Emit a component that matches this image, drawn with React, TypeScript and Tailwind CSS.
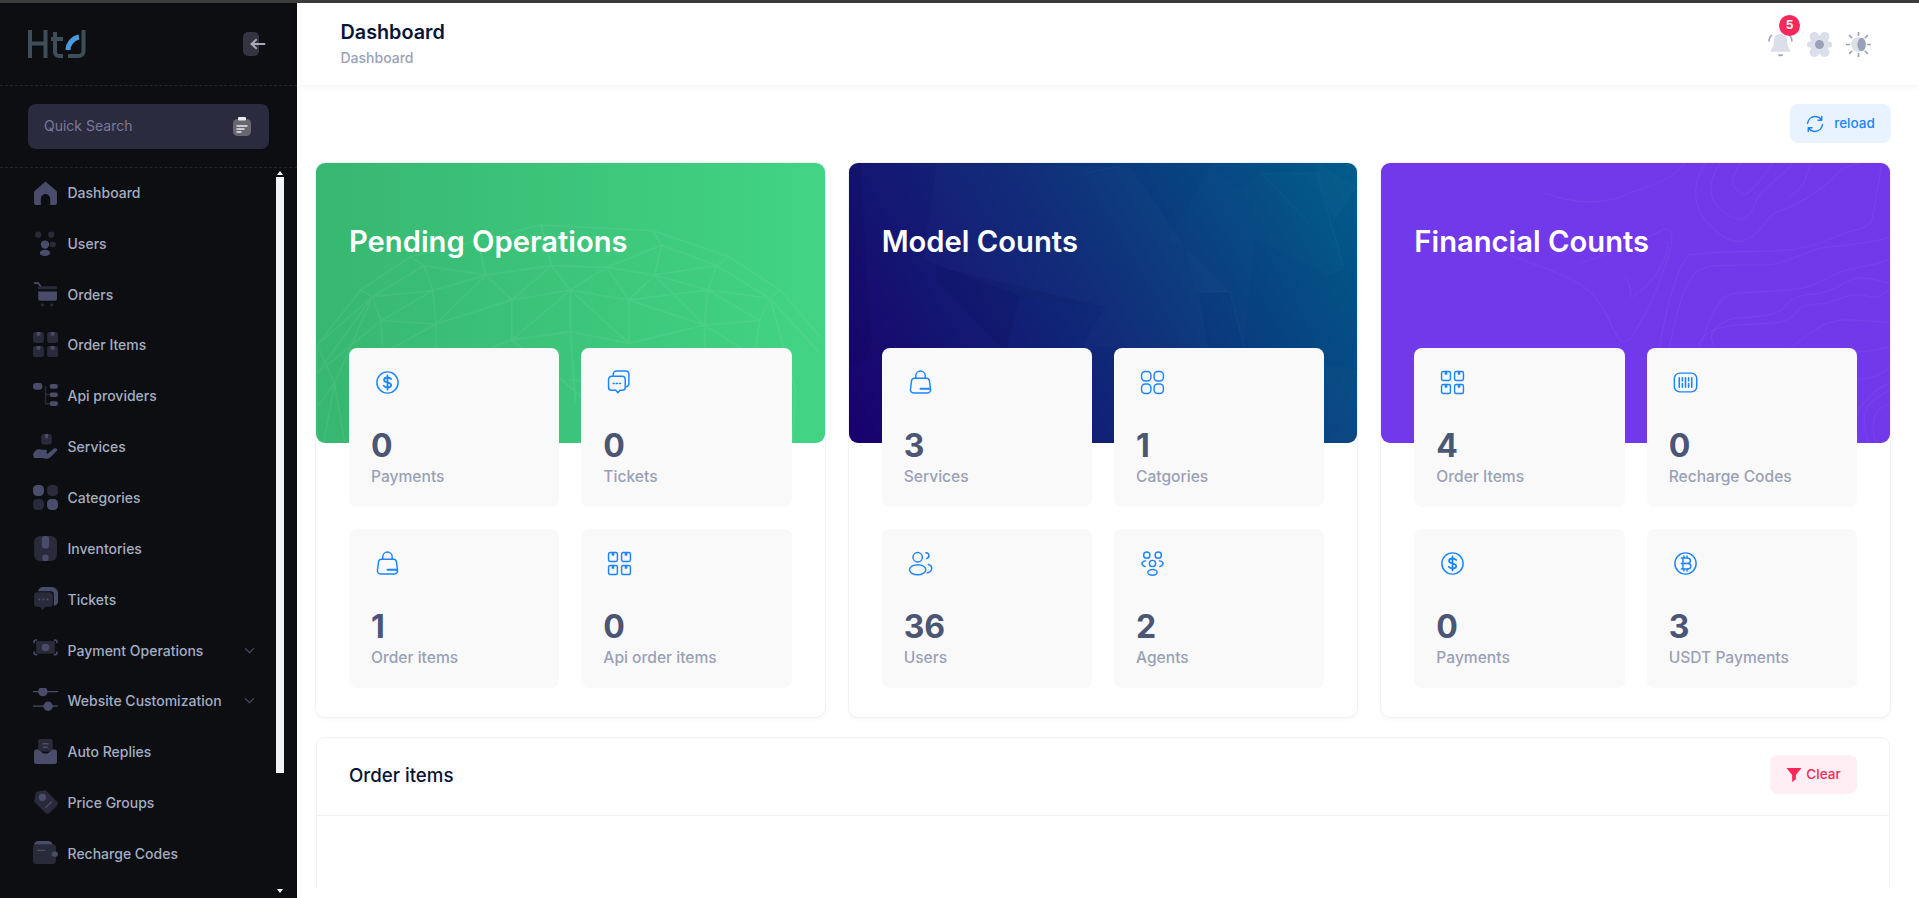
import React from "react";

const DIM = "#2a2b3a";
const MID = "#4a4c6b";

const navIcons: Record<string, React.ReactNode> = {
  home: <path d="M12 1.5 22.5 10.5a2 2 0 0 1 .5 1.4V22a2 2 0 0 1-2 2h-4.5v-6a4.5 4.5 0 0 0-9 0v6H3a2 2 0 0 1-2-2V11.9a2 2 0 0 1 .5-1.4Z" fill={MID} />,
  users: (
    <>
      <circle cx="5" cy="3.5" r="3" fill={DIM} /><circle cx="17.5" cy="3.5" r="3" fill={DIM} />
      <circle cx="11.5" cy="13" r="4" fill={MID} /><ellipse cx="19" cy="13" rx="3" ry="2.6" fill={DIM} />
      <ellipse cx="11.5" cy="21" rx="5" ry="3" fill={MID} />
    </>
  ),
  cart: (
    <>
      <path d="M1 1h4l3 4" stroke={MID} strokeWidth="1.6" fill="none" />
      <path d="M5 4h17a1 1 0 0 1 1 1v2H5Z" fill={DIM} />
      <path d="M5 9h18v7a2 2 0 0 1-2 2H7a2 2 0 0 1-2-2Z" fill={MID} />
      <circle cx="9" cy="22" r="1.6" fill={DIM} /><circle cx="18" cy="22" r="1.6" fill={DIM} />
    </>
  ),
  items: (
    <>
      {[[0, 0], [13.5, 0], [0, 13.5], [13.5, 13.5]].map(([x, y]) => (
        <g key={`${x}${y}`}>
          <rect x={x} y={y} width="10.5" height="10.5" rx="2.5" fill={DIM} />
          <rect x={x + 3.5} y={y} width="3.5" height="3.5" fill={MID} />
        </g>
      ))}
    </>
  ),
  api: (
    <>
      <path d="M12 3v17h4M12 11h4" stroke={DIM} strokeWidth="1.4" fill="none" />
      <rect x="0" y="0" width="9" height="6.5" rx="3.2" fill={MID} />
      <rect x="16" y="1" width="8" height="4.5" rx="2.2" fill={MID} />
      <rect x="16" y="9" width="8" height="4.5" rx="2.2" fill={MID} />
      <rect x="16" y="17.5" width="8" height="4.5" rx="2.2" fill={MID} />
    </>
  ),
  services: (
    <>
      <rect x="8" y="0" width="10" height="10" rx="2" fill={DIM} />
      <rect x="11.5" y="0" width="3" height="4" fill={MID} />
      <path d="M0 20c1-4 4-6 8-5h4c2 0 2 3 0 3l2 1 6-5c2-1 4 0 3 2l-6 6c-2 2-5 2-8 1l-5 0-3 0Z" fill={MID} />
    </>
  ),
  cats: (
    <>
      <rect x="0" y="0" width="10.5" height="10.5" rx="4" fill={MID} />
      <rect x="13.5" y="0" width="10.5" height="10.5" rx="4" fill={DIM} />
      <rect x="0" y="13.5" width="10.5" height="10.5" rx="4" fill={DIM} />
      <rect x="13.5" y="13.5" width="10.5" height="10.5" rx="4" fill={MID} />
    </>
  ),
  inv: (
    <>
      <rect x="1" y="0" width="22" height="24" rx="6" fill={DIM} />
      <rect x="8.5" y="0" width="7" height="12" rx="3" fill={MID} />
      <rect x="9" y="18" width="6" height="6" rx="2" fill={MID} />
    </>
  ),
  tickets: (
    <>
      <path d="M9 0h9a6 6 0 0 1 6 6v8a4 4 0 0 1-4 4V7a3 3 0 0 0-3-3H5a5 5 0 0 1 4-4Z" fill={MID} />
      <path d="M4 5h12a3 3 0 0 1 3 3v8a3 3 0 0 1-3 3h-4l-3 3-2-3H4a3 3 0 0 1-3-3V8a3 3 0 0 1 3-3Z" fill={DIM} />
      <circle cx="6" cy="12" r="1" fill={MID} /><circle cx="10" cy="12" r="1" fill={MID} /><circle cx="14" cy="12" r="1" fill={MID} />
    </>
  ),
  pay: (
    <>
      <rect x="3" y="3" width="18" height="12" fill={DIM} />
      <path d="M1 5V4a2 2 0 0 1 2-2h1M23 5V4a2 2 0 0 0-2-2h-1M1 13v1a2 2 0 0 0 2 2h1M23 13v1a2 2 0 0 1-2 2h-1" stroke={MID} strokeWidth="1.5" fill="none" />
      <circle cx="12" cy="9" r="3.6" fill={MID} />
    </>
  ),
  sliders: (
    <>
      <path d="M0 3.5h24M0 17.5h24" stroke={MID} strokeWidth="1.2" />
      <circle cx="9.5" cy="3.5" r="4.5" fill={MID} />
      <circle cx="14.5" cy="17.5" r="4.5" fill={MID} />
    </>
  ),
  replies: (
    <>
      <path d="M5 2a2 2 0 0 1 2-2h10a2 2 0 0 1 2 2v10H5Z" fill={DIM} />
      <path d="M9 4.5h6M9.5 8h5" stroke={MID} strokeWidth="1.4" />
      <path d="M1 12a2 2 0 0 1 2-2h2l5 4h4l5-4h2a2 2 0 0 1 2 2v10a2 2 0 0 1-2 2H3a2 2 0 0 1-2-2Z" fill={MID} />
    </>
  ),
  price: (
    <>
      <path d="M3 2 12 0l11 11a3 3 0 0 1 0 4l-7 7a3 3 0 0 1-4 0L1 11Z" fill={DIM} />
      <circle cx="9" cy="7" r="3.5" fill={MID} />
      <path d="M12 17l6-6" stroke={MID} strokeWidth="1.2" />
    </>
  ),
  wallet: (
    <>
      <path d="M1 4a4 4 0 0 1 4-4h10a5 5 0 0 1 4 4Z" fill={MID} />
      <rect x="0" y="3" width="22" height="19" rx="3" fill={DIM} />
      <path d="M4 9h8" stroke={MID} strokeWidth="1.2" />
      <rect x="18" y="10" width="6" height="5" rx="2.5" fill={MID} />
    </>
  ),
};

const nav: [string, string, boolean?][] = [
  ["Dashboard", "home"],
  ["Users", "users"],
  ["Orders", "cart"],
  ["Order Items", "items"],
  ["Api providers", "api"],
  ["Services", "services"],
  ["Categories", "cats"],
  ["Inventories", "inv"],
  ["Tickets", "tickets"],
  ["Payment Operations", "pay", true],
  ["Website Customization", "sliders", true],
  ["Auto Replies", "replies"],
  ["Price Groups", "price"],
  ["Recharge Codes", "wallet"],
];

const statIcons: Record<string, React.ReactNode> = {
  dollar: (
    <>
      <circle cx="12" cy="12" r="10.2" />
      <path strokeWidth="1.7" d="M15.5 8.7c-.8-1-2-1.5-3.5-1.5-2 0-3.3.9-3.3 2.4 0 3.4 6.8 1.4 6.8 4.8 0 1.5-1.4 2.4-3.4 2.4-1.6 0-2.9-.6-3.7-1.7M12 5.2v13.6" />
    </>
  ),
  chats: (
    <>
      <path d="M6 5.5V4a3 3 0 0 1 3-3h9a3 3 0 0 1 3 3v9a3 3 0 0 1-2.5 3" />
      <path d="M4.5 6h10a3 3 0 0 1 3 3v7.5a3 3 0 0 1-3 3h-2l-2 2.3-2-2.3h-4a3 3 0 0 1-3-3V9a3 3 0 0 1 3-3Z" />
      <path d="M6 13h1M9 13h1M12 13h1" />
    </>
  ),
  bag: (
    <>
      <path d="M7.5 8V5.5a4.5 4.5 0 0 1 9 0V8" />
      <path d="M6 8h12c1.5 0 2.3 1 2.6 2.3l1 8c.4 2.3-1 3.7-3 3.7H5.4c-2 0-3.400-1.400-3-3.700l1-8C3.700 9 4.500 8 6 8Z" />
      <path strokeWidth="1.800" d="M12 18h9" />
    </>
  ),
  grid: (
    <>
      <rect x="1.500" y="1.500" width="9" height="9" rx="3.500" />
      <rect x="13.500" y="1.500" width="9" height="9" rx="3.500" />
      <rect x="1.500" y="13.500" width="9" height="9" rx="3.500" />
      <rect x="13.500" y="13.500" width="9" height="9" rx="3.500" />
    </>
  ),
  boxes: (
    <>
      {[[1.500, 1.500], [14, 1.500], [1.500, 14], [14, 14]].map(([x, y]) => (
        <g key={`${x}${y}`}>
          <rect x={x} y={y} width="8.500" height="8.500" rx="1.500" />
          <rect x={x + 3} y={y} width="2.500" height="3" fill="#1b84ff" stroke="none" />
        </g>
      ))}
    </>
  ),
  barcode: (
    <>
      <rect x="1.300" y="3" width="21.500" height="18" rx="5" />
      <path d="M6 7.500v9M9 7.500v3M9 13v3.500M12 7.500v9M15 7.500v3M15 13v3.500M18 7.500v9" strokeWidth="1.500" />
    </>
  ),
  people: (
    <>
      <circle cx="9.300" cy="6" r="4.500" />
      <ellipse cx="9.300" cy="18" rx="7.800" ry="4.800" />
      <path d="M17 1.800c3.300-.4 4.400 4.300 1 5.400M19.500 13c4.500 1.200 4.500 6.800-1.200 8" />
    </>
  ),
  agents: (
    <>
      <circle cx="6.500" cy="4" r="3" /><circle cx="17.500" cy="4" r="3" />
      <circle cx="12" cy="12" r="3" />
      <ellipse cx="12" cy="20.500" rx="4.500" ry="2.800" />
      <path d="M5.500 9.500C1 10 .5 13.500 5 15M18.500 9.500c4.500.5 5 4 .5 5.500" />
    </>
  ),
  bitcoin: (
    <>
      <circle cx="12" cy="12" r="10.200" />
      <path d="M8 6.800h5.500c2 0 3.200 1.100 3.200 2.600s-1.200 2.600-3.200 2.600H8M8 12h6c2 0 3.200 1.100 3.200 2.600s-1.200 2.600-3.200 2.600H8M9.500 6.800v10.400M10.500 4.800v2M13.500 4.800v2M10.500 17.200v2M13.500 17.200v2" strokeWidth="1.400" />
    </>
  ),
};

function StatCard({ icon, value, label }: { icon: string; value: string; label: string }) {
  return (
    <div className="h-[159px] rounded-[8px] bg-[#f9f9f9] px-[22px] pt-[22px]">
      <svg viewBox="0 0 24 24" className="ml-[4px] h-[25px] w-[25px]" fill="none" stroke="#1b84ff" strokeWidth="1.400" strokeLinecap="round" strokeLinejoin="round">
        {statIcons[icon]}
      </svg>
      <div className="mt-[31px] text-[32px] leading-[39px] font-bold text-[#4b5675]">{value}</div>
      <div className="text-[15.600px] leading-[24px] font-medium text-[#99a1b7]">{label}</div>
    </div>
  );
}

const meshLines = "M50 585 175 420 320 320 700 225 1025 242 1245 320 1395 420 1510 560 M175 420 210 440 360 347 320 320 M360 347 540 375 730 347 890 352 1050 285 1025 242 M1050 285 1210 347 1245 320 M1210 347 1365 445 1395 420 M210 440 385 422 540 375 615 450 730 347 785 420 890 352 955 450 1030 375 1185 420 1210 347 M360 347 385 422 395 522 540 375 M210 440 235 512 385 422 M235 512 395 522 615 450 785 420 955 450 1185 420 1365 445 1335 512 1185 420 1175 525 1030 375 1050 285 M730 347 700 225 M890 352 1030 375 1210 347 M540 375 520 290 M235 512 50 670 210 440 50 585 M395 522 395 620 M395 522 240 610 235 512 M615 450 615 570 785 420 785 545 615 570 440 640 M615 450 395 522 M785 420 955 580 955 450 1175 525 1335 512 1365 445 1510 610 M785 545 955 580 1175 525 1175 620 M1335 512 1320 620 M1175 525 1320 620 M955 450 1185 420 M1365 445 1440 720 M50 585 100 700 210 440 M100 700 130 880 M100 700 68 880 M100 700 50 770 M50 585 50 880 M785 545 800 760 M780 690 1000 700 M1440 720 1430 880 M615 570 760 690 850 770";

function HeroPattern({ kind }: { kind: string }) {
  if (kind === "mesh") {
    return (
      <svg viewBox="46 39 1478 840" preserveAspectRatio="none" className="absolute inset-0 h-full w-full">
        <path d={meshLines} fill="none" stroke="#ffffff" strokeOpacity="0.06" strokeWidth="5" />
      </svg>
    );
  }
  if (kind === "poly") {
    return (
      <svg viewBox="26 39 1474 840" preserveAspectRatio="none" className="absolute inset-0 h-full w-full">
        <path d="M280 39 240 330 530 440 770 470 700 590 1070 600 1040 430 1130 425 1000 290 840 50Z" fill="#ffffff" fillOpacity="0.015" />
        <path d="M1080 39 1160 120 1220 70 1390 70 1460 350 1410 370 1200 270 1170 590 1130 430 1030 420 1000 290 950 270Z" fill="#ffffff" fillOpacity="0.012" />
        <path d="M1380 39 1500 110 1430 220 1380 70Z M1180 600 1500 660 1500 879 1120 879Z" fill="#ffffff" fillOpacity="0.02" />
        <path d="M60 39 90 620 30 650 26 39Z M280 350 770 470 520 440 480 610 280 390Z" fill="#000030" fillOpacity="0.08" />
        <path d="M710 70 830 45 M1220 70 1380 70 1460 350 M1410 370 1460 355 M1220 70 1360 220 M1040 425 1130 425 1170 590" fill="none" stroke="#ffffff" strokeOpacity="0.035" strokeWidth="3" />
      </svg>
    );
  }
  return (
    <svg viewBox="31 39 1454 840" preserveAspectRatio="none" className="absolute inset-0 h-full w-full" fill="none" stroke="#ffffff" strokeOpacity="0.05" strokeWidth="3">
      <path d="M1060 39c-20 30-30 50-20 70 15 20 25 30 40 20 30-25 50-60 70-90" />
      <path d="M1000 39c-25 40-35 80-15 120 20 25 50 50 80 48 35-10 30-70 70-95 30-30 60-50 70-70M1260 39c-15 30-10 70-60 100" />
      <path d="M960 39c-35 50-40 110-10 160 30 40 70 80 110 75 60-15 70-80 110-90 70-30 130-70 170-120 30-30 70-10 80-50 10-30 0-60 20-75" />
      <path d="M1462 39c-8 60-18 120-28 170-10 30-60 30-100 50-40 20-110 45-210 45-150 0-190 10-210 10-40 30-70 180-90 290" />
      <path d="M1485 260c-50 20-130 25-200 35-50 15-110 50-160 50-130 0-170 0-190 20-40 30-60 130-80 230" />
      <path d="M1485 325c-30 20-60 20-100 30-50 5-100 50-150 60-90 15-190 5-220 25-35 30-55 100-75 160" />
      <path d="M1485 400c-40-10-70-20-100-15-40 15-60 40-100 45-50 5-80 10-100 40-20 25-60 30-150 35-60 25-70 50-50 85" />
      <path d="M1485 420c-30 20-40 30-75 15-40-5-70 15-110 25-50 5-70 5-85 30-20 30-50 30-170 35-80 10-90 30-110 60" />
      <path d="M1485 515c-60 5-110-15-160 0-50 10-80 50-120 75" />
      <path d="M1485 590c-80 25-170 15-240 15" />
      <path d="M1485 650c-30 35-80 40-120 35M1485 700c-40 15-60 40-90 80-10 30-5 70 0 100M1485 720c-30 20-60 30-70 70-5 30 0 60 10 90M1485 760c-20 10-40 20-45 50-5 20 0 50 5 70" />
      <path d="M595 340c70-20 170-60 240-100 40-10 30 40 10 100-20 60-40 120-70 170-20 40-40 80-60 60-20-20-30-70-60-110-30-50-60-60-120-90-60-30-140-50-190-80" />
      <path d="M730 380c20 30 10 70 20 60 30-20 60-50 80-90 20-40 30-90 10-70" />
      <path d="M500 130c80 30 170 40 250-5 60-20 120-40 150-86" />
    </svg>
  );
}

function Panel({ title, hero, kind, stats }: { title: string; hero: string; kind: string; stats: [string, string, string][] }) {
  return (
    <div className="relative h-[554px] flex-1 rounded-[9px] bg-white shadow-[0_3px_4px_rgba(0,0,0,0.03)] outline outline-[#f1f1f4]">
      <div className={`relative h-[280px] overflow-hidden rounded-[9px] ${hero}`}>
        <HeroPattern kind={kind} />
        <h2 className="relative pt-[60px] pl-[33px] text-[29.200px] leading-[38px] font-semibold text-white">{title}</h2>
      </div>
      <div className="relative mx-[33px] -mt-[95px] grid grid-cols-2 gap-x-[22px] gap-y-[22px]">
        {stats.map(([icon, value, label]) => (
          <StatCard key={label} icon={icon} value={value} label={label} />
        ))}
      </div>
    </div>
  );
}

export default function App() {
  return (
    <div className="flex h-[898px] w-[1919px] flex-col overflow-hidden bg-white font-['Inter',sans-serif]">
      <div className="h-[3px] shrink-0 bg-[#3c3c3c]" />
      <div className="flex min-h-0 flex-1">
        <aside className="flex w-[297px] shrink-0 flex-col bg-[#0d0e12]">
          <div className="flex h-[83px] shrink-0 items-center justify-between border-b border-dashed border-[#25262e] pr-[38px] pl-[28px]">
            <svg viewBox="0 0 58 28" className="h-[28px] w-[58px]" fill="none">
              <path d="M2 0v28M17.500 0v28M2 13.500h15.500M27 2v20a4 4 0 0 0 4 4h4M23 9h12" stroke="#3e4e58" strokeWidth="4" />
              <path d="M55.500 0v21a5 5 0 0 1-5 5H40" stroke="#3e4e58" strokeWidth="4" />
              <path d="M40 20c0-6 5-12 11-13" stroke="#4a9bdc" strokeWidth="5" />
            </svg>
            <div className="relative h-[24px] w-[16px] rounded-[5px] bg-[#33343f]">
              <svg viewBox="0 0 18 14" className="absolute top-[6px] left-[6px] h-[12px] w-[17px]" fill="none" stroke="#a8aabb" strokeWidth="2.200">
                <path d="M18 7H2M8 1.500 2 7l6 5.500" />
              </svg>
            </div>
          </div>
          <div className="flex h-[82px] shrink-0 items-center border-b border-dashed border-[#25262e] px-[28px]">
            <div className="flex h-[45px] w-[241px] items-center justify-between rounded-[8px] bg-[#2b2b40] pr-[18px] pl-[16px]">
              <span className="-mt-[2px] text-[14px] text-[#77799a]">Quick Search</span>
              <svg viewBox="0 0 18 19" className="h-[19px] w-[18px]">
                <rect x="0" y="2" width="18" height="17" rx="4.500" fill="#66676f" />
                <rect x="5" y="0" width="8" height="3.500" rx="1" fill="#e8e8ee" />
                <path d="M3.500 9h11M3.500 12h8M3.500 15h5" stroke="#e8e8ee" strokeWidth="1.300" />
              </svg>
            </div>
          </div>
          <div className="relative min-h-0 flex-1 overflow-hidden">
            <nav className="-mt-[1px]">
              {nav.map(([label, icon, sub]) => (
                <div key={label} className="flex h-[50.850px] items-center pr-[41px] pl-[33px]">
                  <svg viewBox="0 0 24 24" className="h-[25px] w-[25px] shrink-0">{navIcons[icon]}</svg>
                  <span className="ml-[9.500px] flex-1 text-[14px] font-medium text-[#a3adc2]">{label}</span>
                  {sub && (
                    <svg viewBox="0 0 12 8" className="mr-[1px] h-[7px] w-[11px]" fill="none" stroke="#4b4d62" strokeWidth="1.300">
                      <path d="M1 1.500 6 6.500l5-5" />
                    </svg>
                  )}
                </div>
              ))}
            </nav>
            <div className="absolute top-[3px] right-[13px] bottom-0 w-[8px]">
              <div className="mx-auto h-0 w-0 border-x-[3px] border-b-[4px] border-x-transparent border-b-white" />
              <div className="mt-[2px] h-[596px] w-[8px] bg-[#f2f2f5]" />
              <div className="absolute right-[1px] bottom-[5px] h-0 w-0 border-x-[3px] border-t-[4px] border-x-transparent border-t-white" />
            </div>
          </div>
        </aside>
        <main className="flex min-w-0 flex-1 flex-col">
          <header className="flex h-[82px] shrink-0 items-center justify-between pr-[48px] pl-[44px] shadow-[0_3px_6px_rgba(0,0,0,0.03)]">
            <div className="-mt-[2px] -ml-[0.500px]">
              <h1 className="text-[19.800px] leading-[24px] font-semibold text-[#071437]">Dashboard</h1>
              <p className="mt-[5px] text-[14px] leading-[18px] font-medium text-[#99a1b7]">Dashboard</p>
            </div>
            <div className="flex items-center gap-[14px]">
              <div className="relative h-[25px] w-[25px]">
                <svg viewBox="0 0 24 24" className="h-[25px] w-[25px]" fill="none">
                  <path d="M12 2c4 0 6.500 2.600 6.500 7 0 5 1.500 6.500 3 8.500.5 1 0 1.500-1 1.500H3.500c-1 0-1.500-.5-1-1.500 1.500-2 3-3.500 3-8.500 0-4.400 2.500-7 6.500-7Z" fill="#dbdfe9" />
                  <path d="M10 21.500c1 1.500 3 1.500 4 0" stroke="#99a1b7" strokeWidth="1.500" />
                  <path d="M1 9c0-2.500 1-5 3-6M23 9c0-2.500-1-5-3-6" stroke="#99a1b7" strokeWidth="1.500" />
                </svg>
                <span className="absolute -top-[17px] left-[11px] flex h-[21px] w-[21px] items-center justify-center rounded-full bg-[#f8285a] text-[12px] font-bold text-white">5</span>
              </div>
              <svg viewBox="0 0 24 24" className="h-[25px] w-[25px]">
                <g fill="#dbdfe9">
                  <circle cx="7" cy="4.500" r="4.500" /><circle cx="17" cy="4.500" r="4.500" />
                  <circle cx="2.800" cy="12" r="2.800" /><circle cx="21.200" cy="12" r="2.800" />
                  <circle cx="7" cy="19.500" r="4.500" /><circle cx="17" cy="19.500" r="4.500" />
                  <circle cx="12" cy="12" r="9" />
                </g>
                <circle cx="12" cy="12" r="4.300" fill="#99a1b7" />
              </svg>
              <svg viewBox="0 0 24 24" className="h-[25px] w-[25px]">
                <path d="M12 0v3M12 21v3M0 12h3M21 12h3M3.500 3.500l2 2M18.500 18.500l2 2M3.500 20.500l2-2M18.500 5.500l2-2" stroke="#99a1b7" strokeWidth="1.600" strokeLinecap="round" />
                <circle cx="12" cy="12" r="7" fill="#dbdfe9" />
                <ellipse cx="15" cy="12" rx="4" ry="6.500" fill="#99a1b7" />
              </svg>
            </div>
          </header>
          <div className="flex flex-1 flex-col pr-[29px] pl-[19px]">
            <div className="flex justify-end pt-[19px]">
              <button className="-mr-[1px] flex h-[39px] w-[101px] items-center justify-center gap-[10px] rounded-[8px] bg-[#e9f3ff] text-[13.500px] font-medium text-[#1b84ff]">
                <svg viewBox="0 0 24 24" className="h-[18px] w-[18px]" fill="none" stroke="#1b84ff" strokeWidth="1.900" strokeLinecap="round" strokeLinejoin="round">
                  <path d="M2 11C3 6 7 2 12 2c4 0 7 2 9 5M21 2v5h-5M22 13c-1 5-5 9-10 9-4 0-7-2-9-5M3 22v-5h5" />
                </svg>
                reload
              </button>
            </div>
            <div className="mt-[20px] flex gap-[24px]">
              <Panel
                title="Pending Operations"
                kind="mesh"
                hero="bg-linear-to-r from-[#37b770] to-[#42d485]"
                stats={[
                  ["dollar", "0", "Payments"],
                  ["chats", "0", "Tickets"],
                  ["bag", "1", "Order items"],
                  ["boxes", "0", "Api order items"],
                ]}
              />
              <Panel
                title="Model Counts"
                kind="poly"
                hero="bg-[linear-gradient(60deg,#1a006d_0%,#0e2b78_50%,#005d8a_100%)]"
                stats={[
                  ["bag", "3", "Services"],
                  ["grid", "1", "Catgories"],
                  ["people", "36", "Users"],
                  ["agents", "2", "Agents"],
                ]}
              />
              <Panel
                title="Financial Counts"
                kind="contour"
                hero="bg-[#7239ea]"
                stats={[
                  ["boxes", "4", "Order Items"],
                  ["barcode", "0", "Recharge Codes"],
                  ["dollar", "0", "Payments"],
                  ["bitcoin", "3", "USDT Payments"],
                ]}
              />
            </div>
            <section className="mt-[20px] h-[151px] rounded-t-[9px] border-x border-t border-[#f1f1f4]">
              <div className="flex h-[78px] items-center justify-between border-b border-[#f1f1f4] pr-[32px] pl-[32px]">
                <h3 className="text-[18.700px] font-medium text-[#071437]">Order items</h3>
                <button className="mb-[4px] flex h-[39px] w-[87px] items-center justify-center gap-[4px] rounded-[8px] bg-[#ffeef3] text-[13.500px] font-medium text-[#f8285a]">
                  <svg viewBox="0 0 16 16" className="h-[15px] w-[16px]">
                    <path d="M0 1h16L10 8.500V13l-4 3V8.500Z" fill="#f8285a" />
                  </svg>
                  Clear
                </button>
              </div>
            </section>
          </div>
        </main>
      </div>
    </div>
  );
}
